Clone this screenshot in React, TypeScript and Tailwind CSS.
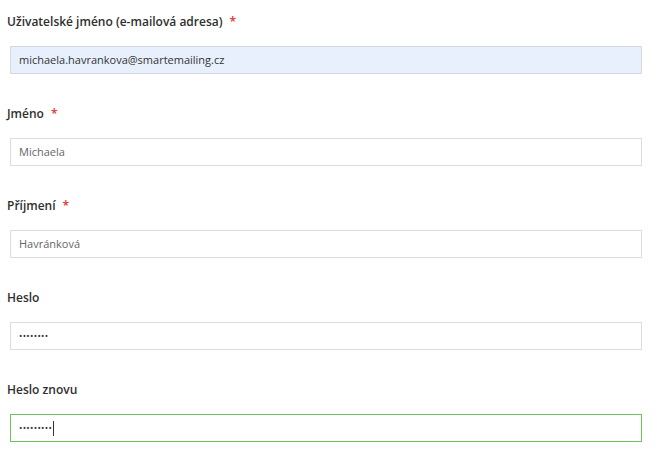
import React from "react";

const fields = [
  { label: "Uživatelské jméno (e-mailová adresa)", required: true, value: "michaela.havrankova@smartemailing.cz", kind: "email" },
  { label: "Jméno", required: true, value: "Michaela", kind: "text" },
  { label: "Příjmení", required: true, value: "Havránková", kind: "text" },
  { label: "Heslo", required: false, value: "••••••••", kind: "password" },
  { label: "Heslo znovu", required: false, value: "•••••••••", kind: "focus" },
];

export default function App() {
  return (
    <div className="h-[457px] w-[660px] bg-white pt-[12px] font-['Open_Sans',sans-serif]">
      {fields.map((f) => (
        <div key={f.label} className="mb-[30px]">
          <div className="pl-[7px] text-[12px] leading-[20px] font-semibold text-[#2f2f2f]">
            {f.label}
            {f.required && <span className="ml-[7px] text-[#e0302c]">*</span>}
          </div>
          <div
            className={
              "mt-[14px] ml-[10px] flex h-[28px] w-[632px] items-center border pl-[8px] text-[11px] " +
              (f.kind === "email"
                ? "border-[#d6d9de] bg-[#e8f0fe] text-[#333]"
                : f.kind === "focus"
                ? "border-[#6cc35a] bg-white text-[#555]"
                : "border-[#dcdcdc] bg-white text-[#666]")
            }
          >
            {f.kind === "password" || f.kind === "focus" ? (
              <span className="text-[9px] tracking-[0.3px] text-[#333]">{f.value}</span>
            ) : (
              <span>{f.value}</span>
            )}
            {f.kind === "focus" && <span className="ml-[1px] h-[15px] w-[1px] bg-[#333]" />}
          </div>
        </div>
      ))}
    </div>
  );
}
